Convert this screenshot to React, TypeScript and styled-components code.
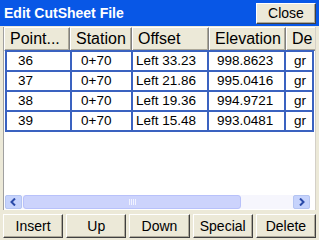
import React from 'react';
import styled, { createGlobalStyle } from 'styled-components';

const Global = createGlobalStyle`
  html, body { margin: 0; padding: 0; }
  body { background: #ece9d8; font-family: "Liberation Sans", Arial, sans-serif; }
`;

const Window = styled.div`
  width: 319px; height: 240px;
  display: flex; flex-direction: column;
  background: #ece9d8;
  overflow: hidden;
`;

const TitleBar = styled.div`
  height: 26px; flex: none;
  background: #0857e6;
  display: flex; align-items: center; justify-content: space-between;
  padding: 0 3px 0 4px;
  color: #fff; font-weight: bold; font-size: 14px;
`;

const CloseButton = styled.button`
  width: 60px; height: 21px;
  background: #ece9d8;
  border: 1px solid;
  border-color: #fff #404040 #404040 #fff;
  box-shadow: inset -1px -1px 0 #aca899;
  font: 14px "Liberation Sans", Arial, sans-serif; color: #000;
  padding: 0;
`;

const ListFrame = styled.div`
  flex: 1;
  margin: 1px 3px 0 3px;
  border-left: 1px solid #a0a0a0;
  border-right: 1px solid #d4d0c8;
  background: #fff;
  display: flex; flex-direction: column;
  overflow: hidden;
`;

const HeaderRow = styled.div`
  display: flex; height: 24px; flex: none;
  background: #ece9d8;
`;

const HeadCell = styled.div<{ w: number }>`
  width: ${p => p.w}px; flex: none;
  border: 1px solid;
  border-color: #fff #808080 #808080 #fff;
  box-shadow: inset -1px -1px 0 #aca899;
  font-size: 16px; line-height: 22px;
  padding-left: 5px; box-sizing: border-box;
  white-space: nowrap; overflow: hidden;
`;

const Rows = styled.div`
  flex: 1;
  padding: 1px 0 0 1px;
`;

const Row = styled.div`
  display: flex; height: 20px;
`;

const Cell = styled.div<{ w: number; pad: number }>`
  width: ${p => p.w}px; flex: none; box-sizing: border-box;
  border: 2px solid #3a62c0;
  margin-left: -2px; margin-top: -2px;
  height: 22px;
  font-size: 13.5px; line-height: 18px;
  padding-left: ${p => p.pad}px;
  white-space: nowrap; overflow: hidden;
  &:first-child { margin-left: 0; }
`;

const ScrollBar = styled.div`
  height: 14px; flex: none; margin: 0 5px 1px 1px;
  display: flex; align-items: stretch;
  background: #f6f6fd;
`;

const Arrow = styled.div`
  width: 15px; flex: none;
  background: #c6d3fc;
  border: 1px solid #b4c4f2; border-radius: 2px;
  display: flex; align-items: center; justify-content: center;
`;

const Track = styled.div`
  flex: 1; display: flex; align-items: stretch; padding: 0 1px;
`;

const Thumb = styled.div`
  width: 216px; background: #ccd3fc;
  border: 1px solid #b8c1fa; border-radius: 3px;
  display: flex; align-items: center; justify-content: center; gap: 1px;
  > i { width: 1px; height: 6px; background: #f0f2ff; }
`;

const ButtonBar = styled.div`
  display: flex; gap: 3px; padding: 4px 3px 2px 3px; flex: none;
`;

const Btn = styled.button`
  flex: 1; height: 24px;
  background: #ece9d8;
  border: 1px solid;
  border-color: #fff #404040 #404040 #fff;
  box-shadow: inset -1px -1px 0 #aca899;
  font: 14px "Liberation Sans", Arial, sans-serif; color: #000;
  padding: 0;
`;

const widths = [66, 62, 77, 77, 40];
const headers = ['Point...', 'Station', 'Offset', 'Elevation', 'De'];
const rowWidths = [67, 63, 78, 79, 30];
const pads = [11, 9, 3, 8, 8];
const data = [
  ['36', '0+70', 'Left 33.23', '998.8623', 'gr'],
  ['37', '0+70', 'Left 21.86', '995.0416', 'gr'],
  ['38', '0+70', 'Left 19.36', '994.9721', 'gr'],
  ['39', '0+70', 'Left 15.48', '993.0481', 'gr'],
];

const Chevron = ({ dir }: { dir: 'l' | 'r' }) => (
  <svg width="7" height="8" viewBox="0 0 7 8">
    <path d={dir === 'l' ? 'M5 0.5 L1.5 4 L5 7.5' : 'M2 0.5 L5.5 4 L2 7.5'} fill="none" stroke="#2a4aa8" strokeWidth="2" />
  </svg>
);

export default function App() {
  return (
    <Window>
      <Global />
      <TitleBar>
        <span>Edit CutSheet File</span>
        <CloseButton>Close</CloseButton>
      </TitleBar>
      <ListFrame>
        <HeaderRow>
          {headers.map((h, i) => <HeadCell key={h} w={widths[i]}>{h}</HeadCell>)}
        </HeaderRow>
        <Rows>
          {data.map(r => (
            <Row key={r[0]}>
              {r.map((c, i) => <Cell key={i} w={rowWidths[i]} pad={pads[i]}>{c}</Cell>)}
            </Row>
          ))}
        </Rows>
        <ScrollBar>
          <Arrow><Chevron dir="l" /></Arrow>
          <Track>
            <Thumb><i /><i /><i /><i /></Thumb>
          </Track>
          <Arrow><Chevron dir="r" /></Arrow>
        </ScrollBar>
      </ListFrame>
      <ButtonBar>
        {['Insert', 'Up', 'Down', 'Special', 'Delete'].map(b => <Btn key={b}>{b}</Btn>)}
      </ButtonBar>
    </Window>
  );
}
